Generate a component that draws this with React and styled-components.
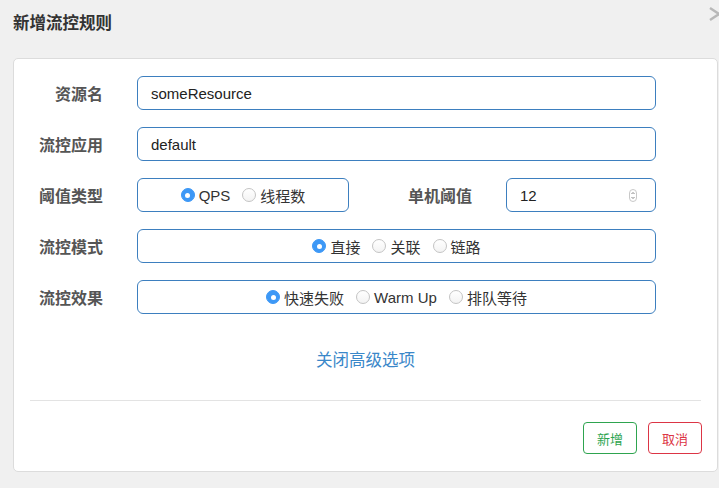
import React from "react";
import styled, { createGlobalStyle } from "styled-components";

const GlobalStyle = createGlobalStyle`
  html, body {
    margin: 0;
    padding: 0;
    background: #f0f0f0;
    overflow: hidden;
  }
  body {
    font-family: "Liberation Sans", "Noto Sans CJK SC", Arial, sans-serif;
    color: #333;
  }
`;

const Dialog = styled.div`
  width: 719px;
  height: 488px;
  box-sizing: border-box;
  padding: 0 0 0 13px;
`;

const Header = styled.div`
  display: flex;
  align-items: center;
  justify-content: space-between;
  height: 44px;
`;

const Title = styled.h4`
  margin: 0;
  font-size: 16.5px;
  font-weight: bold;
  color: #333;
  font-family: "Noto Sans CJK SC", sans-serif;
`;

const Close = styled.svg`
  align-self: flex-start;
  flex: none;
  margin-top: 6px;
  margin-right: -11px;
`;

const Card = styled.div`
  margin-top: 14px;
  width: 705px;
  height: 414px;
  box-sizing: border-box;
  background: #fff;
  border: 1px solid #dcdcdc;
  border-radius: 5px;
  padding: 17px 16px;
`;

const Form = styled.div`
  display: flex;
  flex-direction: column;
  gap: 17px;
`;

const Row = styled.div`
  display: flex;
  align-items: center;
  height: 34px;
`;

const Label = styled.label`
  width: ${(p) => p.$w || 73}px;
  flex: none;
  text-align: right;
  margin-right: 34px;
  font-size: 16px;
  font-weight: bold;
  color: #555;
  font-family: "Noto Sans CJK SC", sans-serif;
`;

const Box = styled.div`
  box-sizing: border-box;
  height: 34px;
  width: ${(p) => p.$w}px;
  border: 1px solid #3d7fbf;
  border-radius: 6px;
  background: #fff;
  display: flex;
  align-items: center;
`;

const Input = styled(Box)`
  padding-left: 13px;
  padding-right: 18px;
  font-size: 15px;
  color: #222;
  justify-content: space-between;
`;

const RadioGroup = styled(Box)`
  justify-content: center;
  gap: 12px;
`;

const RadioItem = styled.span`
  display: inline-flex;
  align-items: center;
  gap: 4px;
  font-size: 15px;
  color: #333;
  font-family: "Liberation Sans", "Noto Sans CJK SC", sans-serif;
`;

const Dot = styled.span`
  box-sizing: border-box;
  width: 14px;
  height: 14px;
  border-radius: 50%;
  flex: none;
  display: inline-flex;
  align-items: center;
  justify-content: center;
  background: ${(p) => (p.$on ? "#3d98f6" : "linear-gradient(#fff, #f3f3f3)")};
  border: 1px solid ${(p) => (p.$on ? "#3d98f6" : "#c4c4c4")};
  &::after {
    content: "";
    display: ${(p) => (p.$on ? "block" : "none")};
    width: 5px;
    height: 5px;
    border-radius: 50%;
    background: #fff;
  }
`;

const Spinner = styled.span`
  box-sizing: border-box;
  width: 8px;
  height: 13px;
  border: 1px solid #c8c8c8;
  border-radius: 4px;
  display: inline-flex;
  align-items: center;
  justify-content: center;
`;

const LinkRow = styled.div`
  margin-top: 33px;
  text-align: center;
  line-height: 24px;
`;

const Link = styled.a`
  font-size: 16.5px;
  color: #3a87c9;
  text-decoration: none;
  font-family: "Noto Sans CJK SC", sans-serif;
`;

const Divider = styled.hr`
  margin: 27px 0 0 0;
  border: 0;
  border-top: 1px solid #e3e3e3;
`;

const Footer = styled.div`
  display: flex;
  justify-content: flex-end;
  gap: 11px;
  margin-top: 21px;
  margin-right: -1px;
`;

const Button = styled.button`
  width: 54px;
  height: 32px;
  box-sizing: border-box;
  background: #fff;
  border: 1px solid ${(p) => p.$color};
  color: ${(p) => p.$color};
  border-radius: 4px;
  font-size: 13px;
  font-family: "Noto Sans CJK SC", sans-serif;
  padding: 0;
`;

const Radio = ({ on, children }) => (
  <RadioItem>
    <Dot $on={on} />
    {children}
  </RadioItem>
);

export default function App() {
  return (
    <>
      <GlobalStyle />
      <Dialog>
        <Header>
          <Title>新增流控规则</Title>
          <Close width="22" height="16" viewBox="0 0 22 16" aria-label="关闭">
            <path d="M2 2 L20 14 M20 2 L2 14" stroke="#b8b8b8" strokeWidth="2.4" fill="none" />
          </Close>
        </Header>
        <Card>
          <Form>
            <Row>
              <Label>资源名</Label>
              <Input $w={519}>someResource</Input>
            </Row>
            <Row>
              <Label>流控应用</Label>
              <Input $w={519}>default</Input>
            </Row>
            <Row>
              <Label>阈值类型</Label>
              <RadioGroup $w={212}>
                <Radio on>QPS</Radio>
                <Radio>线程数</Radio>
              </RadioGroup>
              <Label $w={123}>单机阈值</Label>
              <Input $w={150}>
                12
                <Spinner>
                  <svg width="4" height="9" viewBox="0 0 4 9">
                    <path d="M0.5 3 L2 1.5 L3.5 3 M0.5 6 L2 7.5 L3.5 6" fill="none" stroke="#666" strokeWidth="0.8" />
                  </svg>
                </Spinner>
              </Input>
            </Row>
            <Row>
              <Label>流控模式</Label>
              <RadioGroup $w={519}>
                <Radio on>直接</Radio>
                <Radio>关联</Radio>
                <Radio>链路</Radio>
              </RadioGroup>
            </Row>
            <Row>
              <Label>流控效果</Label>
              <RadioGroup $w={519}>
                <Radio on>快速失败</Radio>
                <Radio>Warm Up</Radio>
                <Radio>排队等待</Radio>
              </RadioGroup>
            </Row>
          </Form>
          <LinkRow>
            <Link href="#">关闭高级选项</Link>
          </LinkRow>
          <Divider />
          <Footer>
            <Button $color="#2ea44f">新增</Button>
            <Button $color="#dc3545">取消</Button>
          </Footer>
        </Card>
      </Dialog>
    </>
  );
}
